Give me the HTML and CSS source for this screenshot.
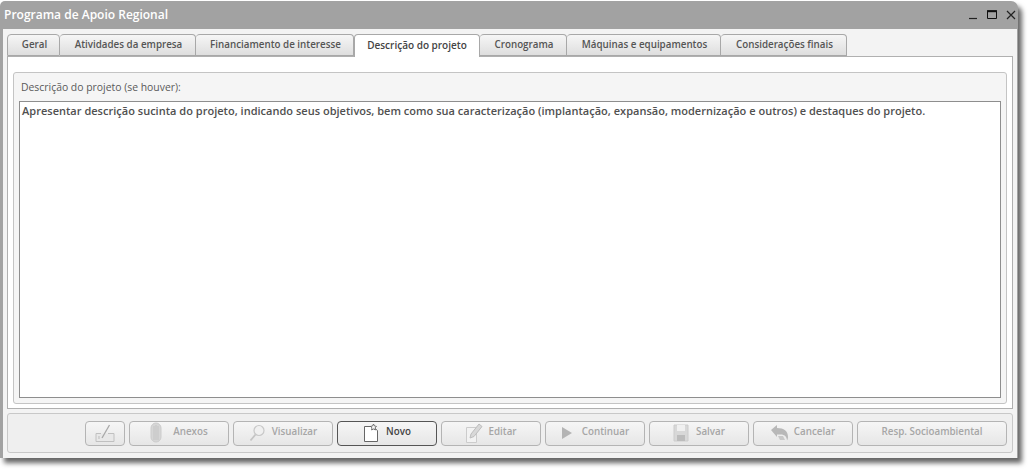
FILE: index.html
```html
<!DOCTYPE html>
<html>
<head>
	<title>Programa de Apoio Regional</title>
	<meta charset="UTF-8">
	<link rel="stylesheet" href="styles.css">
</head>
<body>
	<div class="window">
		<div class="titlebar">
			<span class="title">Programa de Apoio Regional</span>
			<div class="win-buttons">
				<svg width="12" height="12" viewBox="0 0 12 12"><path d="M2 10.500h8" stroke="#222" stroke-width="1.2"/></svg>
				<svg width="12" height="12" viewBox="0 0 12 12"><path d="M1.500 3h9v7.500h-9z" fill="none" stroke="#111" stroke-width="1"/><path d="M1 3.200h10" stroke="#111" stroke-width="2"/></svg>
				<svg width="12" height="12" viewBox="0 0 12 12"><path d="M2 3l8 8M10 3l-8 8" stroke="#222" stroke-width="1.200"/></svg>
			</div>
		</div>
		<div class="window-body">
			<div class="tabs">
				<div class="tab tab-geral">Geral</div>
				<div class="tab tab-atividades">Atividades da empresa</div>
				<div class="tab tab-financiamento">Financiamento de interesse</div>
				<div class="tab tab-descricao active">Descrição do projeto</div>
				<div class="tab tab-cronograma">Cronograma</div>
				<div class="tab tab-maquinas">Máquinas e equipamentos</div>
				<div class="tab tab-consideracoes">Considerações finais</div>
			</div>
			<div class="tab-panel">
				<div class="fieldset">
					<div class="field-label">Descrição do projeto (se houver):</div>
					<div class="textbox">Apresentar descrição sucinta do projeto, indicando seus objetivos, bem como sua caracterização (implantação, expansão, modernização e outros) e destaques do projeto.</div>
				</div>
			</div>
			<div class="toolbar">
				<button class="btn btn-icon">
					<svg width="22" height="20" viewBox="0 0 22 20"><path d="M2 10.500h5M14 10.500h6v8H2v-8" fill="#e8e8e8" stroke="#c0c0c0"/><path d="M8 15L15.500 2" stroke="#a8a8a8" stroke-width="1.300"/><path d="M5 13v3" stroke="#bbb"/></svg>
				</button>
				<button class="btn btn-anexos">
					<svg width="12" height="22" viewBox="0 0 12 22"><rect x="1" y="1" width="10" height="19" rx="5" fill="#d6d6d6" stroke="#ccc"/><path d="M4 4v14M6 3v15M8 4v14" stroke="#c4c4c4"/></svg>
					<span class="btn-text">Anexos</span>
				</button>
				<button class="btn">
					<svg width="16" height="20" viewBox="0 0 16 20"><circle cx="10" cy="7.500" r="5" fill="#f0f0f0" stroke="#c8c8c8" stroke-width="1.200"/><path d="M6.500 11.500l-5 6" stroke="#c4c4c4" stroke-width="1.800"/></svg>
					<span class="btn-text">Visualizar</span>
				</button>
				<button class="btn btn-on">
					<svg width="16" height="20" viewBox="0 0 16 20"><path d="M1.500 3.500h8l5 4v11h-13z" fill="#fff" stroke="#666"/><path d="M10.500 1l1 2 2 .4-1.400 1.500.3 2.100-1.900-1-1.900 1 .3-2.100L7.500 3.400l2-.4z" fill="#f4f4f4" stroke="#555" stroke-width=".8"/></svg>
					<span class="btn-text">Novo</span>
				</button>
				<button class="btn btn-narrowgap">
					<svg width="18" height="22" viewBox="0 0 18 22"><path d="M1.500 5.500h10v15h-10z" fill="#f2f2f2" stroke="#ccc"/><path d="M5 16l1-4 8-10 3 2.500-8 10z" fill="#d8d8d8" stroke="#bdbdbd"/></svg>
					<span class="btn-text">Editar</span>
				</button>
				<button class="btn btn-widegap">
					<svg width="12" height="14" viewBox="0 0 12 14"><path d="M1 1l10 6-10 6z" fill="#b4b4b4"/></svg>
					<span class="btn-text">Continuar</span>
				</button>
				<button class="btn">
					<svg width="16" height="18" viewBox="0 0 16 18"><path d="M1 1h14v16H1z" fill="#d8d8d8" stroke="#ccc"/><path d="M4 1h8v6H4z" fill="#f0f0f0"/><path d="M4 11h8v6H4z" fill="#bcbcbc"/></svg>
					<span class="btn-text">Salvar</span>
				</button>
				<button class="btn btn-narrowgap">
					<svg width="18" height="16" viewBox="0 0 18 16"><path d="M0 5l6-5v3c7 0 11 3 11 9 0 1-.3 2.500-1 3.500 0-4-3-6-6-6H6v2.500z" fill="#b8b8b8"/><path d="M7 11h5l2 4H9z" fill="#c8c8c8"/></svg>
					<span class="btn-text">Cancelar</span>
				</button>
				<button class="btn btn-wide">
					<span class="btn-text">Resp. Socioambiental</span>
				</button>
			</div>
		</div>
	</div>
</body>
</html>
```

FILE: styles.css
```css
* {
	margin: 0;
	padding: 0;
	box-sizing: border-box;
}

html, body {
	width: 1032px;
	height: 472px;
	overflow: hidden;
	background: #fff;
}

body {
	font-family: 'Open Sans', sans-serif;
	font-size: 11px;
	padding: 1px 0 0 0;
}

.window {
	width: 1018px;
	height: 457px;
	display: flex;
	flex-direction: column;
	background: #a2a2a2;
	border-radius: 5px 7px 0 0;
	box-shadow: 4px 5px 5px rgba(0,0,0,0.6);
}

.titlebar {
	height: 28px;
	flex: none;
	display: flex;
	align-items: center;
	justify-content: space-between;
	padding: 0 1px 2px 4px;
}

.title {
	font-size: 12px;
	font-weight: 600;
	color: #fff;
}

.win-buttons {
	display: flex;
	gap: 7px;
}

.window-body {
	flex: 1;
	margin: 0 1px 0 3px;
	background: #f3f3f3;
	padding: 5px 4px 5px 4px;
	display: flex;
	flex-direction: column;
}

.tabs {
	display: flex;
	height: 22px;
	flex: none;
	position: relative;
	z-index: 1;
}

.tab {
	height: 22px;
	display: flex;
	align-items: center;
	justify-content: center;
	padding: 0 0 2px 2px;
	font-size: 9.8px;
	font-weight: 600;
	color: #555;
	background: linear-gradient(#f6f6f6, #dedede);
	border: 1px solid #a8a8a8;
	border-left: none;
	border-radius: 4px 4px 0 0;
}

.tab:first-child {
	border-left: 1px solid #a8a8a8;
}

.tab-geral { width: 53px; }
.tab-atividades { width: 136px; }
.tab-financiamento { width: 158px; }
.tab-descricao { width: 126px; }
.tab-cronograma { width: 87px; }
.tab-maquinas { width: 154px; }
.tab-consideracoes { width: 126px; }

.tab.active {
	height: 23px;
	padding-left: 0;
	font-size: 10px;
	background: #fff;
	border-bottom: none;
	border-left: 1px solid #a8a8a8;
	color: #444;
}

.tab-panel {
	flex: 1;
	background: #fff;
	border: 1px solid #b0b0b0;
	padding: 15px 5px 4px 5px;
	display: flex;
}

.fieldset {
	flex: 1;
	display: flex;
	flex-direction: column;
	background: #f5f5f5;
	border: 1px solid #c4c4c4;
	border-radius: 3px;
	padding: 0 5px 5px 5px;
}

.field-label {
	height: 28px;
	line-height: 28px;
	font-size: 10.4px;
	color: #5a5a5a;
	padding-left: 2px;
}

.textbox {
	flex: 1;
	background: #fff;
	border: 1px solid #8e8e8e;
	padding: 1px 2px;
	font-size: 11px;
	font-weight: 600;
	letter-spacing: 0.015px;
	color: #505050;
	white-space: nowrap;
}

.toolbar {
	flex: none;
	height: 40px;
	margin-top: 4px;
	display: flex;
	justify-content: flex-end;
	align-items: center;
	gap: 4px;
	padding: 0 5px 0 0;
	background: #efefef;
	border: 1px solid #c8c8c8;
	border-radius: 3px;
}

.btn {
	width: 100px;
	height: 25px;
	display: flex;
	align-items: center;
	justify-content: center;
	gap: 7px;
	font-family: 'Open Sans', sans-serif;
	font-size: 9.8px;
	font-weight: 600;
	color: #a6a6a6;
	background: linear-gradient(#f6f6f6, #e6e6e6);
	border: 1px solid #b4b4b4;
	border-radius: 4px;
}

.btn-text {
	padding-bottom: 3px;
}

.btn-icon { width: 40px; }
.btn-wide { width: 150px; }
.btn-anexos { gap: 11px; }
.btn-narrowgap { gap: 5px; }
.btn-widegap { gap: 9px; }

.btn-on {
	color: #444;
	border-color: #555;
}
```
